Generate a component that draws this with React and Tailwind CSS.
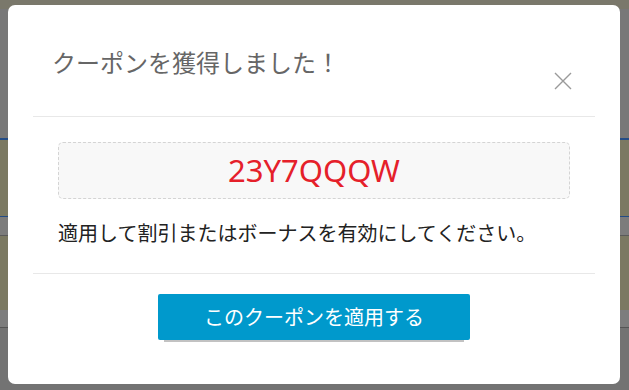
export default function App() {
  return (
    <div className="relative w-[629px] h-[390px] overflow-hidden bg-[#787878] font-['Noto_Sans_CJK_JP','Noto_Sans',sans-serif]">
      {/* dimmed page behind the dialog */}
      <div className="flex flex-col w-full h-full">
        <div className="h-[9px] bg-[#7a786b]" />
        <div className="h-[129px]" />
        <div className="h-[2px] bg-[#234c86]" />
        <div className="h-[76px] bg-[#7b7962]" />
        <div className="h-[1px] bg-[#234c86]" />
        <div className="h-[18px] bg-[#7c7c7c]" />
        <div className="h-[1px] bg-[#5a5a5a]" />
        <div className="h-[74px] bg-[#7b7962]" />
        <div className="h-[17px] bg-[#7d7d7d]" />
        <div className="h-[1px] bg-[#555]" />
        <div className="flex-1 bg-[#737373]" />
      </div>

      <div className="absolute left-[8px] top-[5px] w-[612px] h-[379px] bg-white rounded-[7px] flex flex-col">
        <div className="mx-[25px] h-[112px] border-b border-[#e8e8e8] relative">
          <h2 className="pl-[19px] pt-[42px] text-[24px] leading-[30px] text-[#666] font-normal">
            クーポンを獲得しました！
          </h2>
          <button className="absolute right-[21px] top-[65px] w-[22px] h-[22px] flex items-center justify-center text-[#9a9a9a]">
            <svg width="20" height="20" viewBox="0 0 20 20" fill="none" stroke="currentColor" strokeWidth="1.4">
              <path d="M2 2 L18 18 M18 2 L2 18" />
            </svg>
          </button>
        </div>

        <div className="mx-[25px] h-[157px] border-b border-[#e8e8e8] px-[25px] pt-[25px]">
          <div className="h-[57px] rounded-[5px] border border-dashed border-[#d4d4d4] bg-[#f8f8f8] flex items-center justify-center">
            <span className="text-[#e5202a] text-[31px] leading-none font-['Noto_Sans',sans-serif]">23Y7QQQW</span>
          </div>
          <p className="mt-[21px] text-[20px] leading-[26px] text-[#222]">
            適用して割引またはボーナスを有効にしてください。
          </p>
        </div>

        <div className="flex justify-center pt-[20px]">
          <button className="w-[312px] h-[46px] bg-[#0099cc] rounded-[2px] text-white text-[20px] shadow-[0_8px_0_-6px_#c2c2c2]">
            このクーポンを適用する
          </button>
        </div>
      </div>
    </div>
  )
}
